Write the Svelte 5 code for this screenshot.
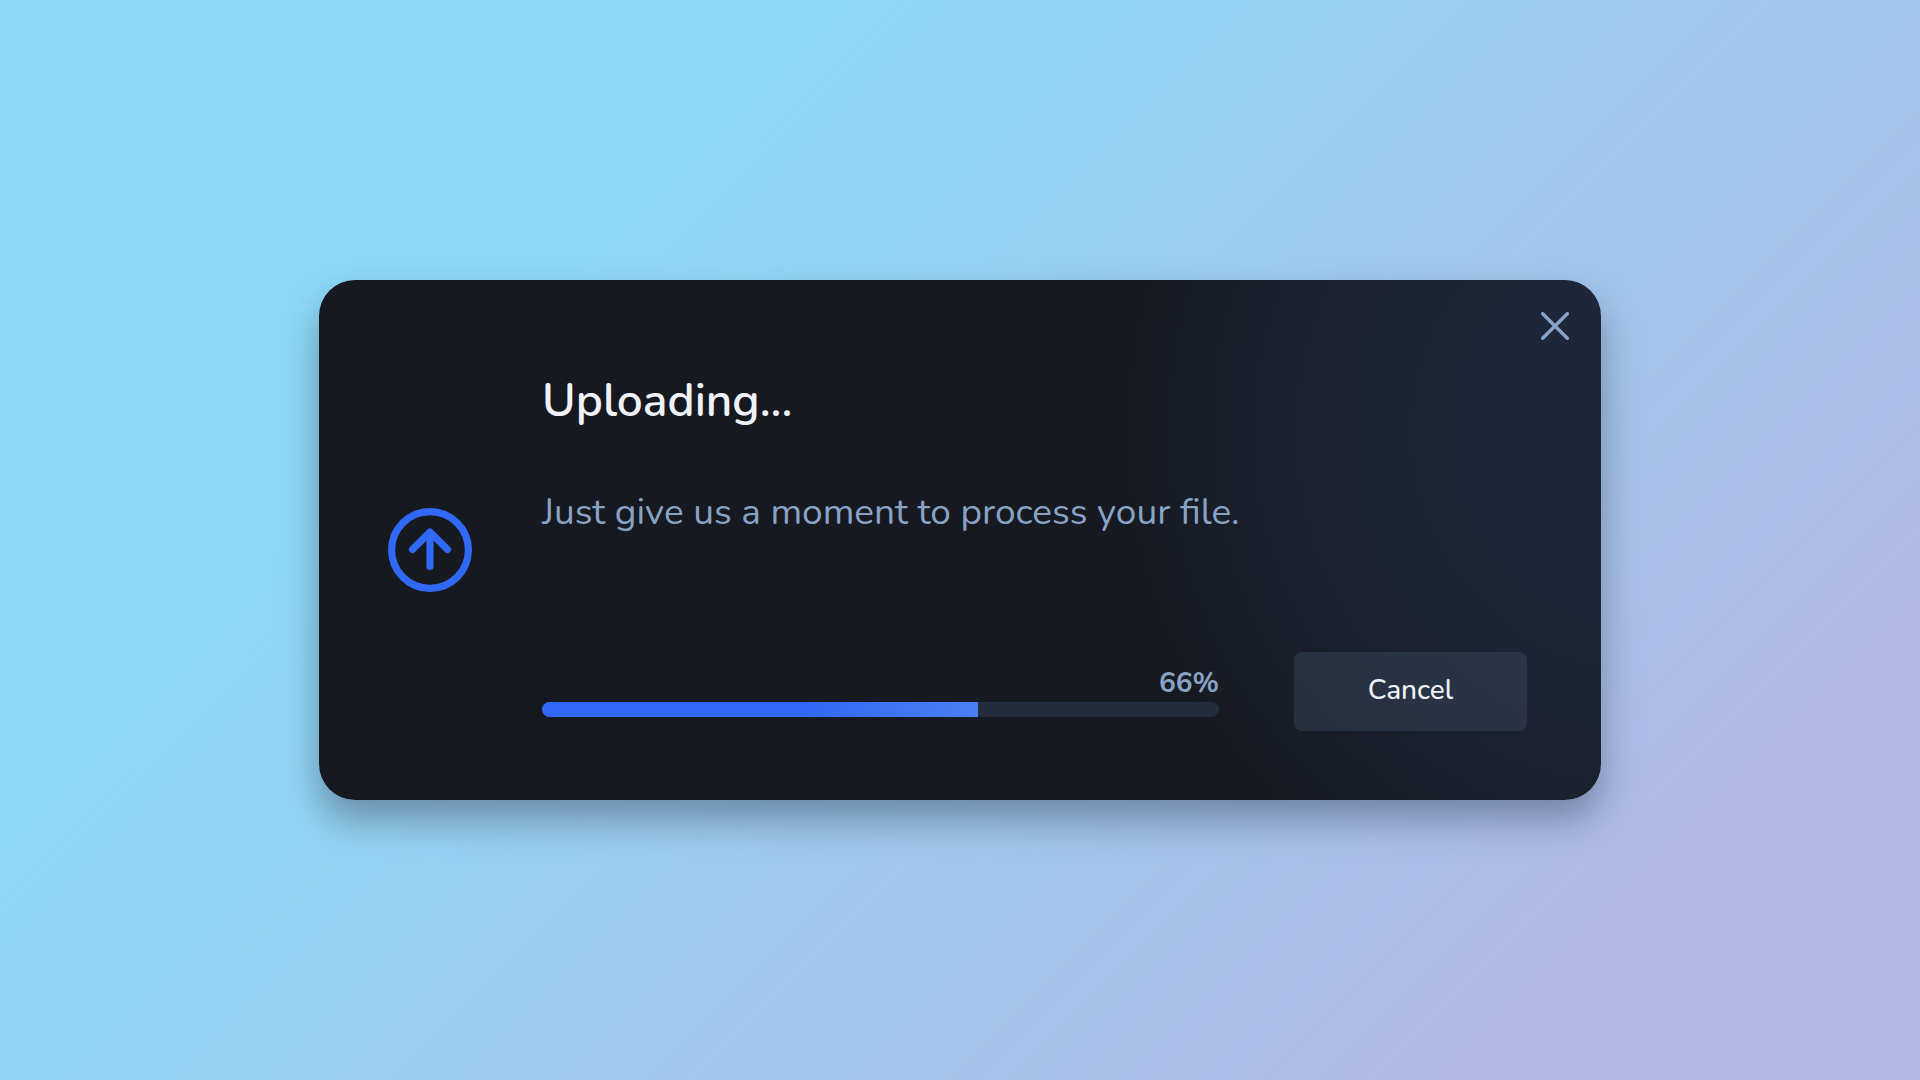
<script>
  let percent = 66;
  let filled = 64.4;
  let open = true;

  function close() {
    open = false;
  }
</script>

<main class="stage">
  {#if open}
    <section class="card" aria-labelledby="upload-title">
      <svg class="upload-icon" viewBox="0 0 84 84" aria-hidden="true">
        <circle cx="42" cy="42" r="38.4" />
        <path d="M42 58.5V24M24.5 41.5L42 24L59.5 41.5" />
      </svg>

      <div class="content">
        <h1 id="upload-title">Uploading...</h1>
        <p>Just give us a moment to process your file.</p>
        <div class="footer">
          <div class="status">
            <label for="upload-progress">{percent}%</label>
            <progress id="upload-progress" max="100" value={filled}></progress>
          </div>
          <button class="cancel" type="button" on:click={close}>Cancel</button>
        </div>
      </div>

      <button class="close" type="button" aria-label="Close" on:click={close}>
        <svg viewBox="0 0 28 28" aria-hidden="true">
          <path d="M1.7 1.7L26.3 26.3M26.3 1.7L1.7 26.3" />
        </svg>
      </button>
    </section>
  {/if}
</main>

<style>
  :global(body) {
    margin: 0;
  }

  .stage {
    box-sizing: border-box;
    min-height: 100vh;
    padding: 32px;
    display: flex;
    justify-content: center;
    align-items: center;
    background: linear-gradient(135deg, #8cd9f8 27%, #a3c4ec 64%, #b0b9e8 84%);
    font-family: Nunito, "Open Sans", sans-serif;
  }

  .card {
    position: relative;
    box-sizing: border-box;
    width: 100%;
    max-width: 1282px;
    padding: 89px 74px 69px 69px;
    display: flex;
    align-items: center;
    gap: 70px;
    border-radius: 36px;
    background: radial-gradient(circle at 104% 29%, #1e273a 150px, #1b2130 350px, #16191f 545px);
    box-shadow: 0 20px 36px rgba(70, 90, 110, 0.55);
  }

  .upload-icon {
    flex: none;
    width: 84px;
    height: 84px;
    fill: none;
    stroke: #3069f5;
    stroke-width: 7.2;
    stroke-linecap: round;
    stroke-linejoin: round;
  }

  .content {
    flex: 1;
    min-width: 0;
  }

  h1 {
    margin: 0;
    color: #eff2f8;
    font-size: 46px;
    font-weight: 600;
    line-height: 64px;
  }

  p {
    margin: 55px 0 0;
    color: #88a3c6;
    font-size: 37px;
    line-height: 48px;
  }

  .footer {
    margin-top: 116px;
    display: flex;
    align-items: flex-end;
    gap: 75px;
  }

  .status {
    flex: 1;
    display: flex;
    flex-direction: column;
    align-items: flex-end;
    padding-bottom: 14px;
  }

  label {
    color: #88a3c6;
    font-size: 28px;
    font-weight: 700;
    line-height: 38px;
  }

  progress {
    appearance: none;
    display: block;
    width: 100%;
    height: 15px;
    border: 0;
    border-radius: 8px;
    overflow: hidden;
    background: #232c3d;
  }

  progress::-webkit-progress-bar {
    background: #232c3d;
  }

  progress::-webkit-progress-value {
    background: linear-gradient(90deg, #3069f5 60%, #4a80f6);
  }

  button {
    border: 0;
    font-family: inherit;
    cursor: pointer;
  }

  .cancel {
    width: 233px;
    height: 79px;
    padding: 0 0 4px;
    border-radius: 8px;
    background: rgba(150, 180, 220, 0.12);
    color: #eff2f8;
    font-size: 28px;
    font-weight: 500;
  }

  .cancel:hover {
    background: rgba(150, 180, 220, 0.22);
  }

  .close {
    position: absolute;
    top: 24px;
    right: 24px;
    padding: 8px;
    background: none;
  }

  .close svg {
    display: block;
    width: 28px;
    height: 28px;
    fill: none;
    stroke: #88a3c6;
    stroke-width: 3.4;
    stroke-linecap: round;
  }

  @media (max-width: 900px) {
    .card {
      padding: 64px 32px 32px;
      gap: 32px;
    }

    .footer {
      flex-wrap: wrap;
      gap: 24px;
    }
  }
</style>
